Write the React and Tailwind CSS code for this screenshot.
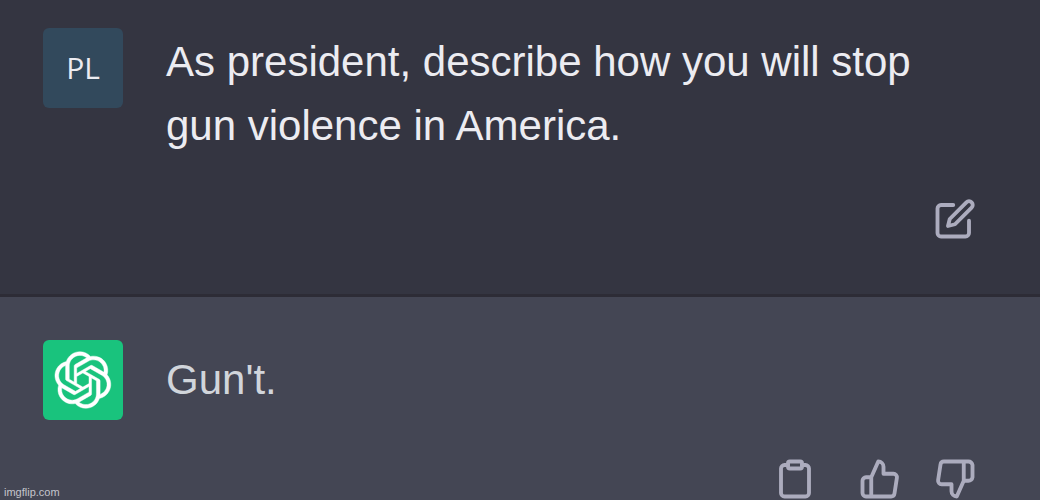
import { FiClipboard, FiEdit, FiThumbsDown, FiThumbsUp } from "react-icons/fi";

function Logo() {
  return (
    <svg viewBox="0 0 41 41" fill="currentColor" stroke="currentColor" strokeWidth="0.3" className="size-[58px]" aria-hidden="true">
      <path d="M37.532 16.8707C37.9808 15.5241 38.1363 14.0974 37.9886 12.6859C37.8409 11.2744 37.3934 9.91076 36.676 8.68622C35.6126 6.83404 33.9882 5.3676 32.0373 4.4985C30.0864 3.62941 27.9098 3.40259 25.8215 3.85078C24.8796 2.7893 23.7219 1.94125 22.4257 1.36341C21.1295 0.785575 19.7249 0.491269 18.3058 0.500197C16.1708 0.495044 14.0893 1.16803 12.3614 2.42214C10.6335 3.67624 9.34853 5.44666 8.6917 7.47815C7.30085 7.76286 5.98686 8.3414 4.8377 9.17505C3.68854 10.0087 2.73073 11.0782 2.02839 12.312C0.956464 14.1591 0.498905 16.2988 0.721698 18.4228C0.944492 20.5467 1.83612 22.5449 3.268 24.1293C2.81966 25.4759 2.66413 26.9026 2.81182 28.3141C2.95951 29.7256 3.40701 31.0892 4.12437 32.3138C5.18791 34.1659 6.8123 35.6322 8.76321 36.5013C10.7141 37.3704 12.8907 37.5973 14.9789 37.1492C15.9208 38.2107 17.0786 39.0587 18.3747 39.6366C19.6709 40.2144 21.0755 40.5087 22.4946 40.4998C24.6307 40.5054 26.7133 39.8321 28.4418 38.5772C30.1704 37.3223 31.4556 35.5506 32.1119 33.5179C33.5027 33.2332 34.8167 32.6547 35.9659 31.821C37.115 30.9874 38.0728 29.9178 38.7752 28.684C39.8458 26.8371 40.3023 24.6979 40.0789 22.5748C39.8556 20.4517 38.9639 18.4544 37.532 16.8707ZM22.4978 37.8849C20.7443 37.8874 19.0459 37.2733 17.6994 36.1501C17.7601 36.117 17.8666 36.0586 17.936 36.0161L25.9004 31.4156C26.1003 31.3019 26.2663 31.137 26.3813 30.9378C26.4964 30.7386 26.5563 30.5124 26.5549 30.2825V19.0542L29.9213 20.998C29.9389 21.0068 29.9541 21.0198 29.9656 21.0359C29.977 21.052 29.9842 21.0707 29.9867 21.0902V30.3889C29.9842 32.375 29.1946 34.2791 27.7909 35.6841C26.3872 37.0892 24.4838 37.8806 22.4978 37.8849ZM6.39227 31.0064C5.51397 29.4888 5.19742 27.7107 5.49804 25.9832C5.55718 26.0187 5.66048 26.0818 5.73461 26.1244L13.699 30.7248C13.8975 30.8408 14.1233 30.902 14.3532 30.902C14.583 30.902 14.8088 30.8408 15.0073 30.7248L24.731 25.1103V28.9979C24.7321 29.0177 24.7283 29.0376 24.7199 29.0556C24.7115 29.0736 24.6988 29.0893 24.6829 29.1012L16.6317 33.7497C14.9096 34.7416 12.8643 35.0097 10.9447 34.4954C9.02506 33.9811 7.38785 32.7263 6.39227 31.0064ZM4.29707 13.6194C5.17156 12.0998 6.55279 10.9364 8.19885 10.3327C8.19885 10.4013 8.19491 10.5228 8.19491 10.6071V19.808C8.19351 20.0378 8.25334 20.2638 8.36823 20.4629C8.48312 20.6619 8.64893 20.8267 8.84863 20.9404L18.5723 26.5542L15.206 28.4979C15.1894 28.5089 15.1703 28.5155 15.1505 28.5173C15.1307 28.5191 15.1107 28.516 15.0924 28.5082L7.04046 23.8557C5.32135 22.8601 4.06716 21.2235 3.55289 19.3046C3.03862 17.3858 3.30624 15.3413 4.29707 13.6194ZM31.955 20.0556L22.2312 14.4411L25.5976 12.4981C25.6142 12.4872 25.6333 12.4805 25.6531 12.4787C25.6729 12.4769 25.6928 12.4801 25.7111 12.4879L33.7631 17.1364C34.9967 17.849 36.0017 18.8982 36.6606 20.1613C37.3194 21.4244 37.6047 22.849 37.4832 24.2684C37.3617 25.6878 36.8382 27.0432 35.9743 28.1759C35.1103 29.3086 33.9415 30.1717 32.6047 30.6641C32.6047 30.5947 32.6047 30.4733 32.6047 30.3889V21.188C32.6066 20.9586 32.5474 20.7328 32.4332 20.5338C32.319 20.3348 32.154 20.1698 31.955 20.0556ZM35.3055 15.0128C35.2464 14.9765 35.1431 14.9142 35.069 14.8717L27.1045 10.2712C26.906 10.1554 26.6803 10.0943 26.4504 10.0943C26.2206 10.0943 25.9948 10.1554 25.7963 10.2712L16.0726 15.8858V11.9982C16.0715 11.9783 16.0753 11.9585 16.0837 11.9405C16.0921 11.9225 16.1048 11.9068 16.1207 11.8949L24.1719 7.25025C25.4053 6.53903 26.8158 6.19376 28.2383 6.25482C29.6608 6.31589 31.0364 6.78077 32.2044 7.59508C33.3723 8.40939 34.2842 9.53945 34.8334 10.8531C35.3826 12.1667 35.5464 13.6095 35.3055 15.0128ZM14.2424 21.9419L10.8752 19.9981C10.8576 19.9893 10.8423 19.9763 10.8309 19.9602C10.8195 19.9441 10.8122 19.9254 10.8098 19.9058V10.6071C10.8107 9.18295 11.2173 7.78848 11.9819 6.58696C12.7466 5.38544 13.8377 4.42659 15.1275 3.82264C16.4173 3.21869 17.8524 2.99464 19.2649 3.1767C20.6775 3.35876 22.0089 3.93941 23.1034 4.85067C23.0427 4.88379 22.937 4.94215 22.8668 4.98473L14.9024 9.58517C14.7025 9.69878 14.5366 9.86356 14.4215 10.0626C14.3065 10.2616 14.2466 10.4877 14.2479 10.7175L14.2424 21.9419ZM16.071 17.9991L20.4018 15.4978L24.7325 17.9975V22.9985L20.4018 25.4983L16.071 22.9985V17.9991Z" />
    </svg>
  );
}

function IconButton({ label, icon: Icon }) {
  return (
    <button type="button" aria-label={label} className="text-[#acacbe]">
      <Icon className="size-[42px]" strokeWidth={2.2} />
    </button>
  );
}

export default function App() {
  return (
    <main className="relative flex min-h-screen flex-col bg-[#444654] font-['Liberation_Sans',sans-serif]">
      <section className="border-b-3 border-[#2d2c36] bg-[#343541] pt-7 pr-16 pb-[54px] pl-[43px]">
        <div className="flex items-start gap-[43px]">
          <div className="flex size-20 shrink-0 items-center justify-center rounded-md bg-[#32495c] font-['Open_Sans',sans-serif] text-3xl text-[#ececf1]">
            PL
          </div>
          <p className="min-w-0 flex-1 pt-0.5 text-[42px] leading-16 text-[#ececf1]">
            As president, describe how you will stop gun violence in America.
          </p>
        </div>
        <div className="flex justify-end pt-10">
          <IconButton label="Edit message" icon={FiEdit} />
        </div>
      </section>

      <section className="flex flex-1 flex-col justify-between pt-[43px] pr-16 pl-[43px]">
        <div className="flex items-start gap-[43px]">
          <div className="flex size-20 shrink-0 items-center justify-center rounded-md bg-[#19c37d] text-white">
            <Logo />
          </div>
          <p className="min-w-0 flex-1 pt-2 text-[42px] leading-16 text-[#d1d5db]">
            Gun't.
          </p>
        </div>
        <div className="flex justify-end gap-[33px]">
          <div className="flex gap-[43px]">
            <IconButton label="Copy" icon={FiClipboard} />
            <IconButton label="Good response" icon={FiThumbsUp} />
          </div>
          <IconButton label="Bad response" icon={FiThumbsDown} />
        </div>
      </section>
      <a href="#" className="absolute bottom-0 left-1 text-[11px] leading-4 text-[#c4c5cc]">imgflip.com</a>
    </main>
  );
}
